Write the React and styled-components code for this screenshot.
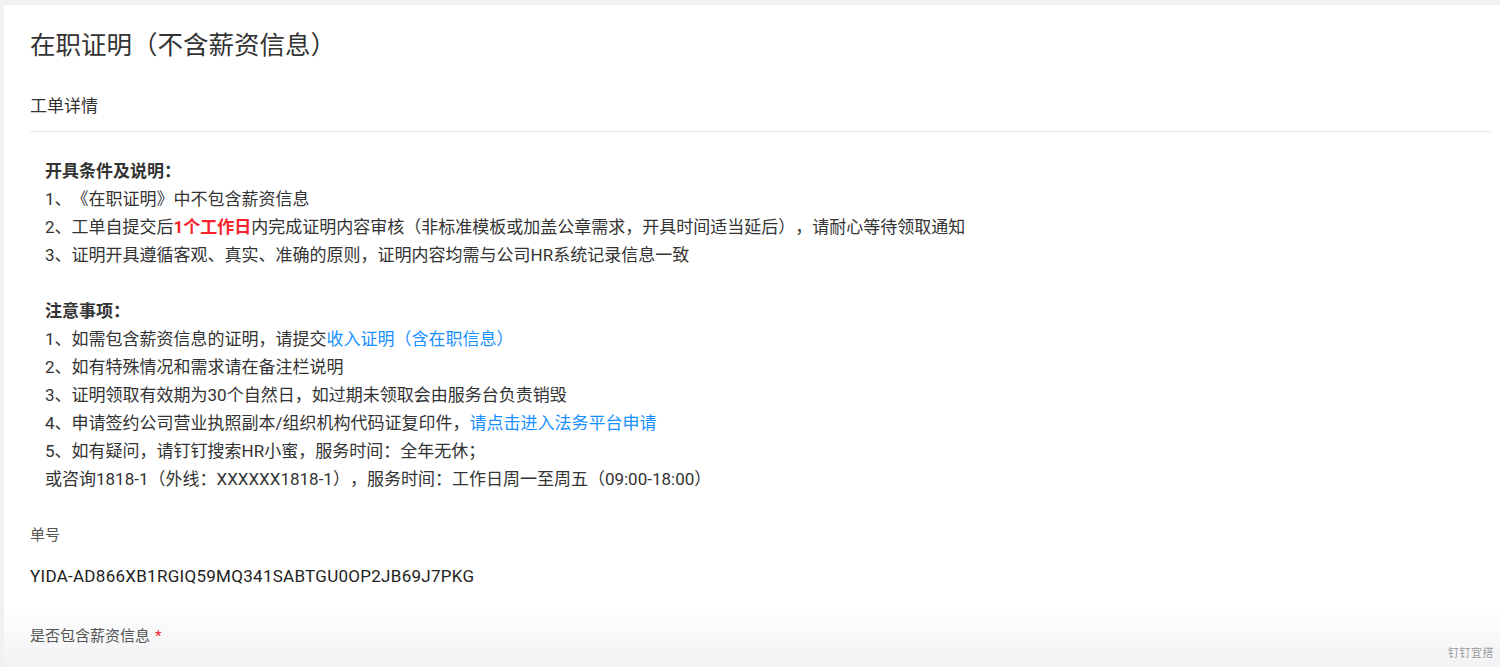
import styled, { createGlobalStyle } from "styled-components";

const GlobalStyle = createGlobalStyle`
  html, body {
    margin: 0;
    padding: 0;
    background: #eff1f3;
  }
  body {
    font-family: Roboto, "Noto Sans CJK SC", "Noto Sans", sans-serif;
    color: #333;
    text-spacing-trim: space-all;
  }
`;

const Page = styled.div`
  padding: 5px 0 0 4px;
  height: 667px;
  box-sizing: border-box;
  overflow: hidden;
`;

// the bottom of the card fades into grey, as in the form preview
const Card = styled.div`
  position: relative;
  height: 100%;
  box-sizing: border-box;
  padding: 22px 9px 0 26px;
  background: linear-gradient(to bottom, #fff calc(100% - 62px), #f1f2f4 100%);
`;

const Title = styled.h1`
  margin: 0;
  font-size: 25.5px;
  line-height: 36px;
  font-weight: 400;
  color: #333;
`;

const SectionHead = styled.div`
  margin-top: 29px;
  padding-bottom: 11px;
  border-bottom: 1px solid #e6e8eb;
  font-size: 17px;
  line-height: 28px;
  color: #333;
`;

const Notice = styled.div`
  margin-top: 25px;
  padding-left: 15px;
  font-size: 17px;
  line-height: 28px;
  color: #333;
`;

const Line = styled.div`
  white-space: nowrap;
  font-weight: ${(p) => (p.$bold ? 700 : 400)};
  min-height: 28px;
`;

const Red = styled.span`
  color: #f5222d;
  font-weight: 700;
`;

const Blue = styled.a`
  color: #1890ff;
  text-decoration: none;
  cursor: pointer;
`;

const Field = styled.div`
  margin-top: ${(p) => p.$top}px;
`;

const Label = styled.div`
  font-size: 15px;
  line-height: 22px;
  color: #555;
`;

const Required = styled.span`
  color: #f5222d;
  margin-left: 5px;
`;

const Value = styled.div`
  margin-top: 16px;
  font-size: 17px;
  line-height: 28px;
  letter-spacing: 0.28px;
  color: #222;
`;

const Brand = styled.div`
  position: absolute;
  right: 6px;
  bottom: 7px;
  font-size: 11px;
  color: #999;
  letter-spacing: 0.5px;
`;

export default function App() {
  return (
    <>
      <GlobalStyle />
      <Page>
        <Card>
          <Title>在职证明（不含薪资信息）</Title>
          <SectionHead>工单详情</SectionHead>
          <Notice>
            <Line $bold>开具条件及说明：</Line>
            <Line>1、《在职证明》中不包含薪资信息</Line>
            <Line>
              2、工单自提交后<Red>1个工作日</Red>
              内完成证明内容审核（非标准模板或加盖公章需求，开具时间适当延后），请耐心等待领取通知
            </Line>
            <Line>3、证明开具遵循客观、真实、准确的原则，证明内容均需与公司HR系统记录信息一致</Line>
            <Line />
            <Line $bold>注意事项：</Line>
            <Line>
              1、如需包含薪资信息的证明，请提交<Blue>收入证明（含在职信息）</Blue>
            </Line>
            <Line>2、如有特殊情况和需求请在备注栏说明</Line>
            <Line>3、证明领取有效期为30个自然日，如过期未领取会由服务台负责销毁</Line>
            <Line>
              4、申请签约公司营业执照副本/组织机构代码证复印件，<Blue>请点击进入法务平台申请</Blue>
            </Line>
            <Line>5、如有疑问，请钉钉搜索HR小蜜，服务时间：全年无休；</Line>
            <Line>或咨询1818-1（外线：XXXXXX1818-1），服务时间：工作日周一至周五（09:00-18:00）</Line>
          </Notice>
          <Field $top={31}>
            <Label>单号</Label>
            <Value>YIDA-AD866XB1RGIQ59MQ341SABTGU0OP2JB69J7PKG</Value>
          </Field>
          <Field $top={35}>
            <Label>
              是否包含薪资信息<Required>*</Required>
            </Label>
          </Field>
          <Brand>钉钉宜搭</Brand>
        </Card>
      </Page>
    </>
  );
}
